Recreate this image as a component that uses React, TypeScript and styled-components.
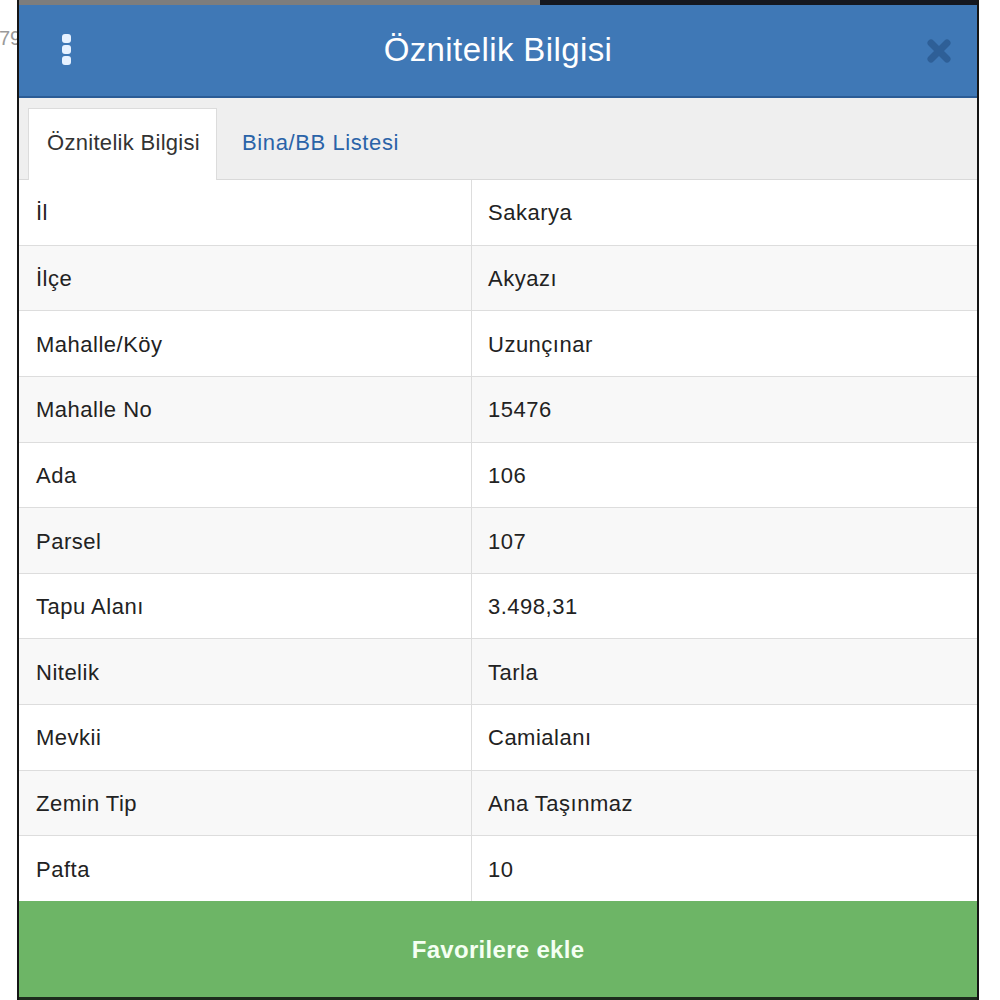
import React from 'react';
import styled, { createGlobalStyle } from 'styled-components';

const GlobalStyle = createGlobalStyle`
  html, body {
    margin: 0;
    padding: 0;
    background: #ffffff;
  }
  body {
    font-family: "Liberation Sans", Arial, "Noto Sans", sans-serif;
    color: #333333;
  }
`;

const Page = styled.div`
  display: flex;
  width: 1000px;
  height: 1000px;
  overflow: hidden;
  background: #ffffff;
`;

const Gutter = styled.div`
  width: 17px;
  flex-shrink: 0;
  overflow: hidden;
  white-space: nowrap;
  padding-top: 27px;
  font-size: 20px;
  color: #9a9a9a;
  text-indent: -1px;
`;

const Modal = styled.div`
  width: 958px;
  flex-shrink: 0;
  display: flex;
  flex-direction: column;
  border-left: 2px solid #151515;
  border-right: 2px solid #151515;
`;

const TopStrip = styled.div`
  height: 5px;
  background: linear-gradient(to right, #7d7d7d 0, #7d7d7d 521px, #151820 521px);
`;

const Header = styled.div`
  height: 91px;
  display: grid;
  grid-template-columns: 90px 1fr 90px;
  align-items: center;
  background: #3f78b6;
  border-bottom: 2px solid #2b5c96;
  color: #ffffff;
`;

const Kebab = styled.div`
  display: flex;
  flex-direction: column;
  align-items: center;
  gap: 2px;
  justify-self: start;
  margin-left: 43px;
  margin-top: -3px;
`;

const Dot = styled.span`
  width: 9px;
  height: 9px;
  border-radius: 3px;
  background: #e6f1ff;
`;

const Title = styled.h1`
  margin: 0;
  text-align: center;
  font-size: 33px;
  font-weight: 400;
  letter-spacing: 0.4px;
  margin-top: -2px;
`;

const CloseButton = styled.div`
  justify-self: end;
  margin-right: 25px;
  display: flex;
  align-items: center;
`;

const TabBar = styled.div`
  height: 81px;
  display: flex;
  align-items: flex-end;
  padding-left: 9px;
  background: #efefef;
  border-bottom: 1px solid #d9d9d9;
`;

const Tab = styled.div<{ active?: boolean }>`
  height: 72px;
  box-sizing: border-box;
  display: flex;
  align-items: center;
  padding: 0 16px 4px 18px;
  margin-bottom: -1px;
  font-size: 22px;
  letter-spacing: ${p => (p.active ? '0.3px' : '0.6px')};
  color: ${p => (p.active ? '#333333' : '#2a63a8')};
  background: ${p => (p.active ? '#ffffff' : 'transparent')};
  border: 1px solid ${p => (p.active ? '#dcdcdc' : 'transparent')};
  border-bottom: none;
  margin-right: 6px;
`;

const Table = styled.div`
  display: flex;
  flex-direction: column;
  flex: 1;
`;

const Row = styled.div<{ striped?: boolean }>`
  flex: 1;
  display: grid;
  grid-template-columns: 452px 1fr;
  background: ${p => (p.striped ? '#f8f8f8' : '#ffffff')};
  border-top: 1px solid #dddddd;

  &:first-child {
    border-top: none;
  }
`;

const Cell = styled.div<{ value?: boolean }>`
  display: flex;
  align-items: center;
  padding-left: ${p => (p.value ? '16px' : '17px')};
  padding-top: 2px;
  font-size: 22px;
  letter-spacing: 0.5px;
  color: #222222;
  border-left: ${p => (p.value ? '1px solid #dddddd' : 'none')};
`;

const FavButton = styled.button`
  height: 96px;
  flex-shrink: 0;
  border: none;
  margin: 0;
  padding-top: 3px;
  background: #6db566;
  color: #f4fff2;
  font-family: inherit;
  font-size: 24px;
  font-weight: 700;
  letter-spacing: 0.3px;
  cursor: pointer;
`;

const BottomStrip = styled.div`
  height: 3px;
  flex-shrink: 0;
  background: #1d2b1d;
`;

const rows: [string, string][] = [
  ['İl', 'Sakarya'],
  ['İlçe', 'Akyazı'],
  ['Mahalle/Köy', 'Uzunçınar'],
  ['Mahalle No', '15476'],
  ['Ada', '106'],
  ['Parsel', '107'],
  ['Tapu Alanı', '3.498,31'],
  ['Nitelik', 'Tarla'],
  ['Mevkii', 'Camialanı'],
  ['Zemin Tip', 'Ana Taşınmaz'],
  ['Pafta', '10'],
];

const CloseIcon = () => (
  <svg width="26" height="24" viewBox="0 0 26 24">
    <path d="M5 4 L21 20 M21 4 L5 20" stroke="#2e5f97" strokeWidth="7" strokeLinecap="round" />
  </svg>
);

const App = () => {
  return (
    <>
      <GlobalStyle />
      <Page>
        <Gutter>79</Gutter>
        <Modal>
          <TopStrip />
          <Header>
            <Kebab>
              <Dot />
              <Dot />
              <Dot />
            </Kebab>
            <Title>Öznitelik Bilgisi</Title>
            <CloseButton>
              <CloseIcon />
            </CloseButton>
          </Header>
          <TabBar>
            <Tab active>Öznitelik Bilgisi</Tab>
            <Tab>Bina/BB Listesi</Tab>
          </TabBar>
          <Table>
            {rows.map(([label, value], i) => (
              <Row key={label} striped={i % 2 === 1}>
                <Cell>{label}</Cell>
                <Cell value>{value}</Cell>
              </Row>
            ))}
          </Table>
          <FavButton>Favorilere ekle</FavButton>
          <BottomStrip />
        </Modal>
      </Page>
    </>
  );
};

export default App;
